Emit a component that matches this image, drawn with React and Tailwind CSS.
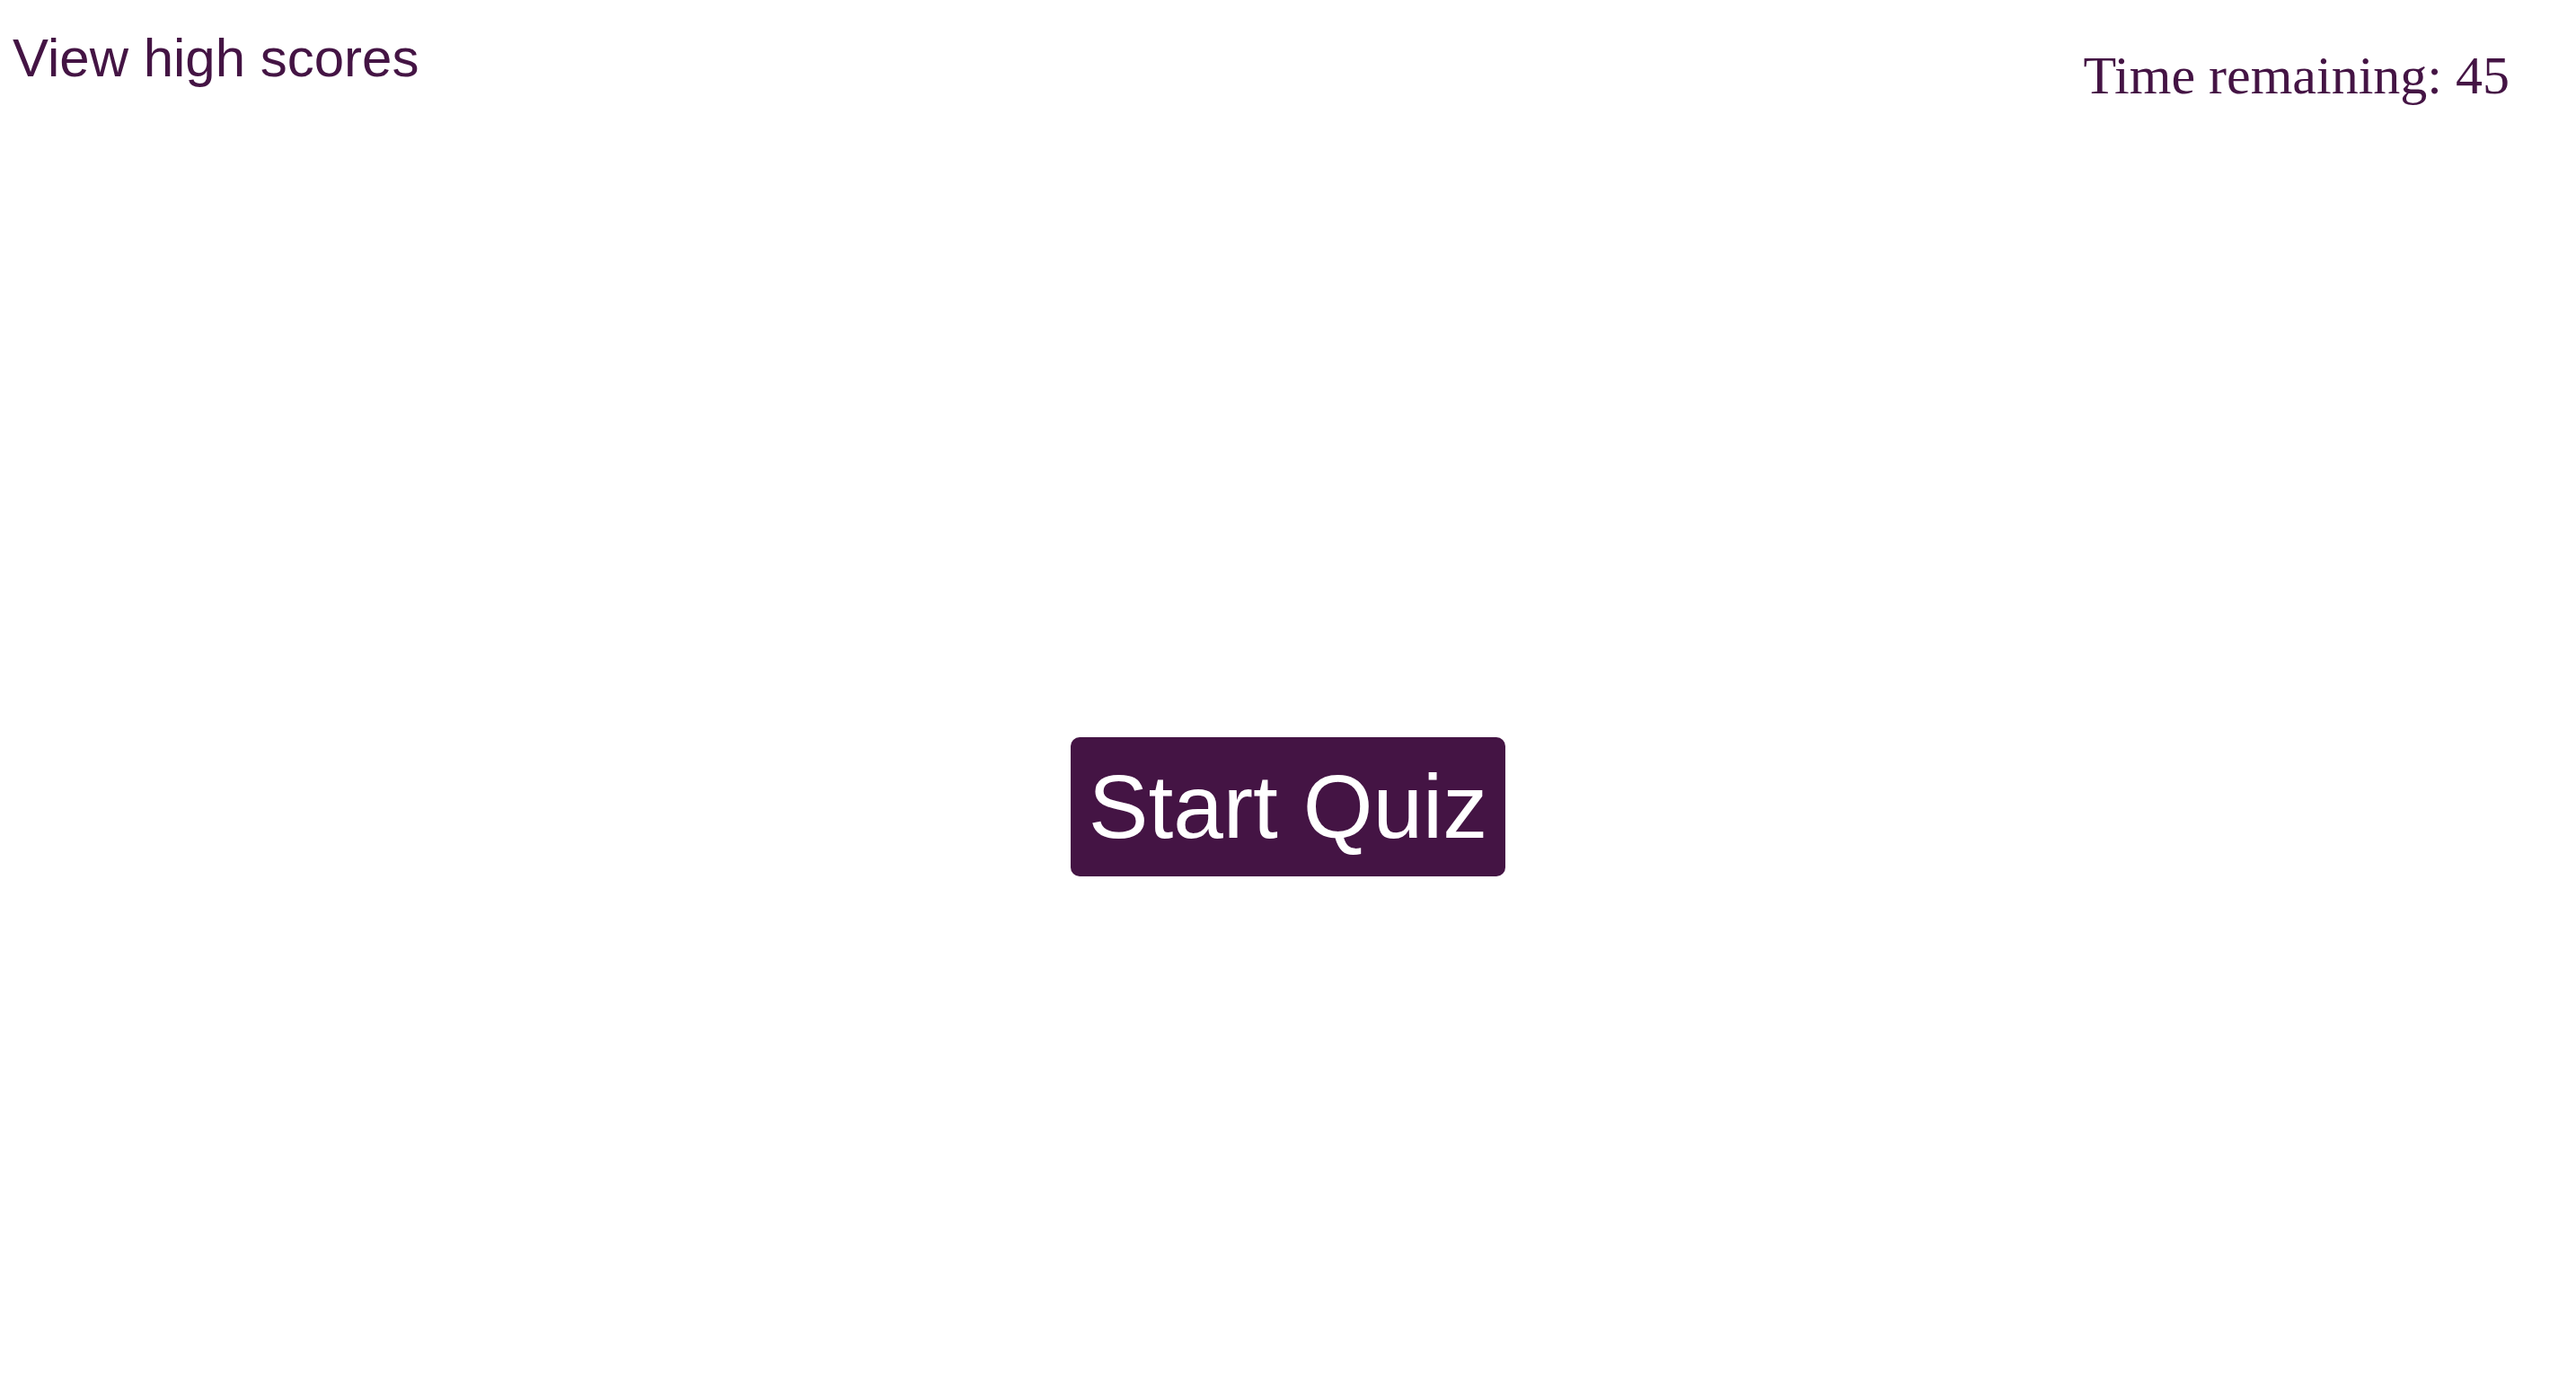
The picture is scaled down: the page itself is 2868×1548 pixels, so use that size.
export default function App() {
  return (
    <div className="flex min-h-screen flex-col bg-white text-[#441444]">
      <header className="flex items-start justify-between pr-[74px] pl-[14px]">
        <button type="button" className="mt-[30px] font-['Liberation_Sans',sans-serif] text-[60px] leading-[70px]">
          View high scores
        </button>
        <p className="mt-[49px] font-['Liberation_Serif',serif] text-[60px] leading-[70px]">Time remaining: 45</p>
      </header>
      <main className="flex grow flex-col items-center pt-[702px]">
        <button
          type="button"
          className="rounded-[10px] bg-[#441444] px-[20px] py-[20px] font-['Liberation_Sans',sans-serif] text-[100px] leading-[115px] text-white"
        >
          Start Quiz
        </button>
      </main>
    </div>
  );
}
